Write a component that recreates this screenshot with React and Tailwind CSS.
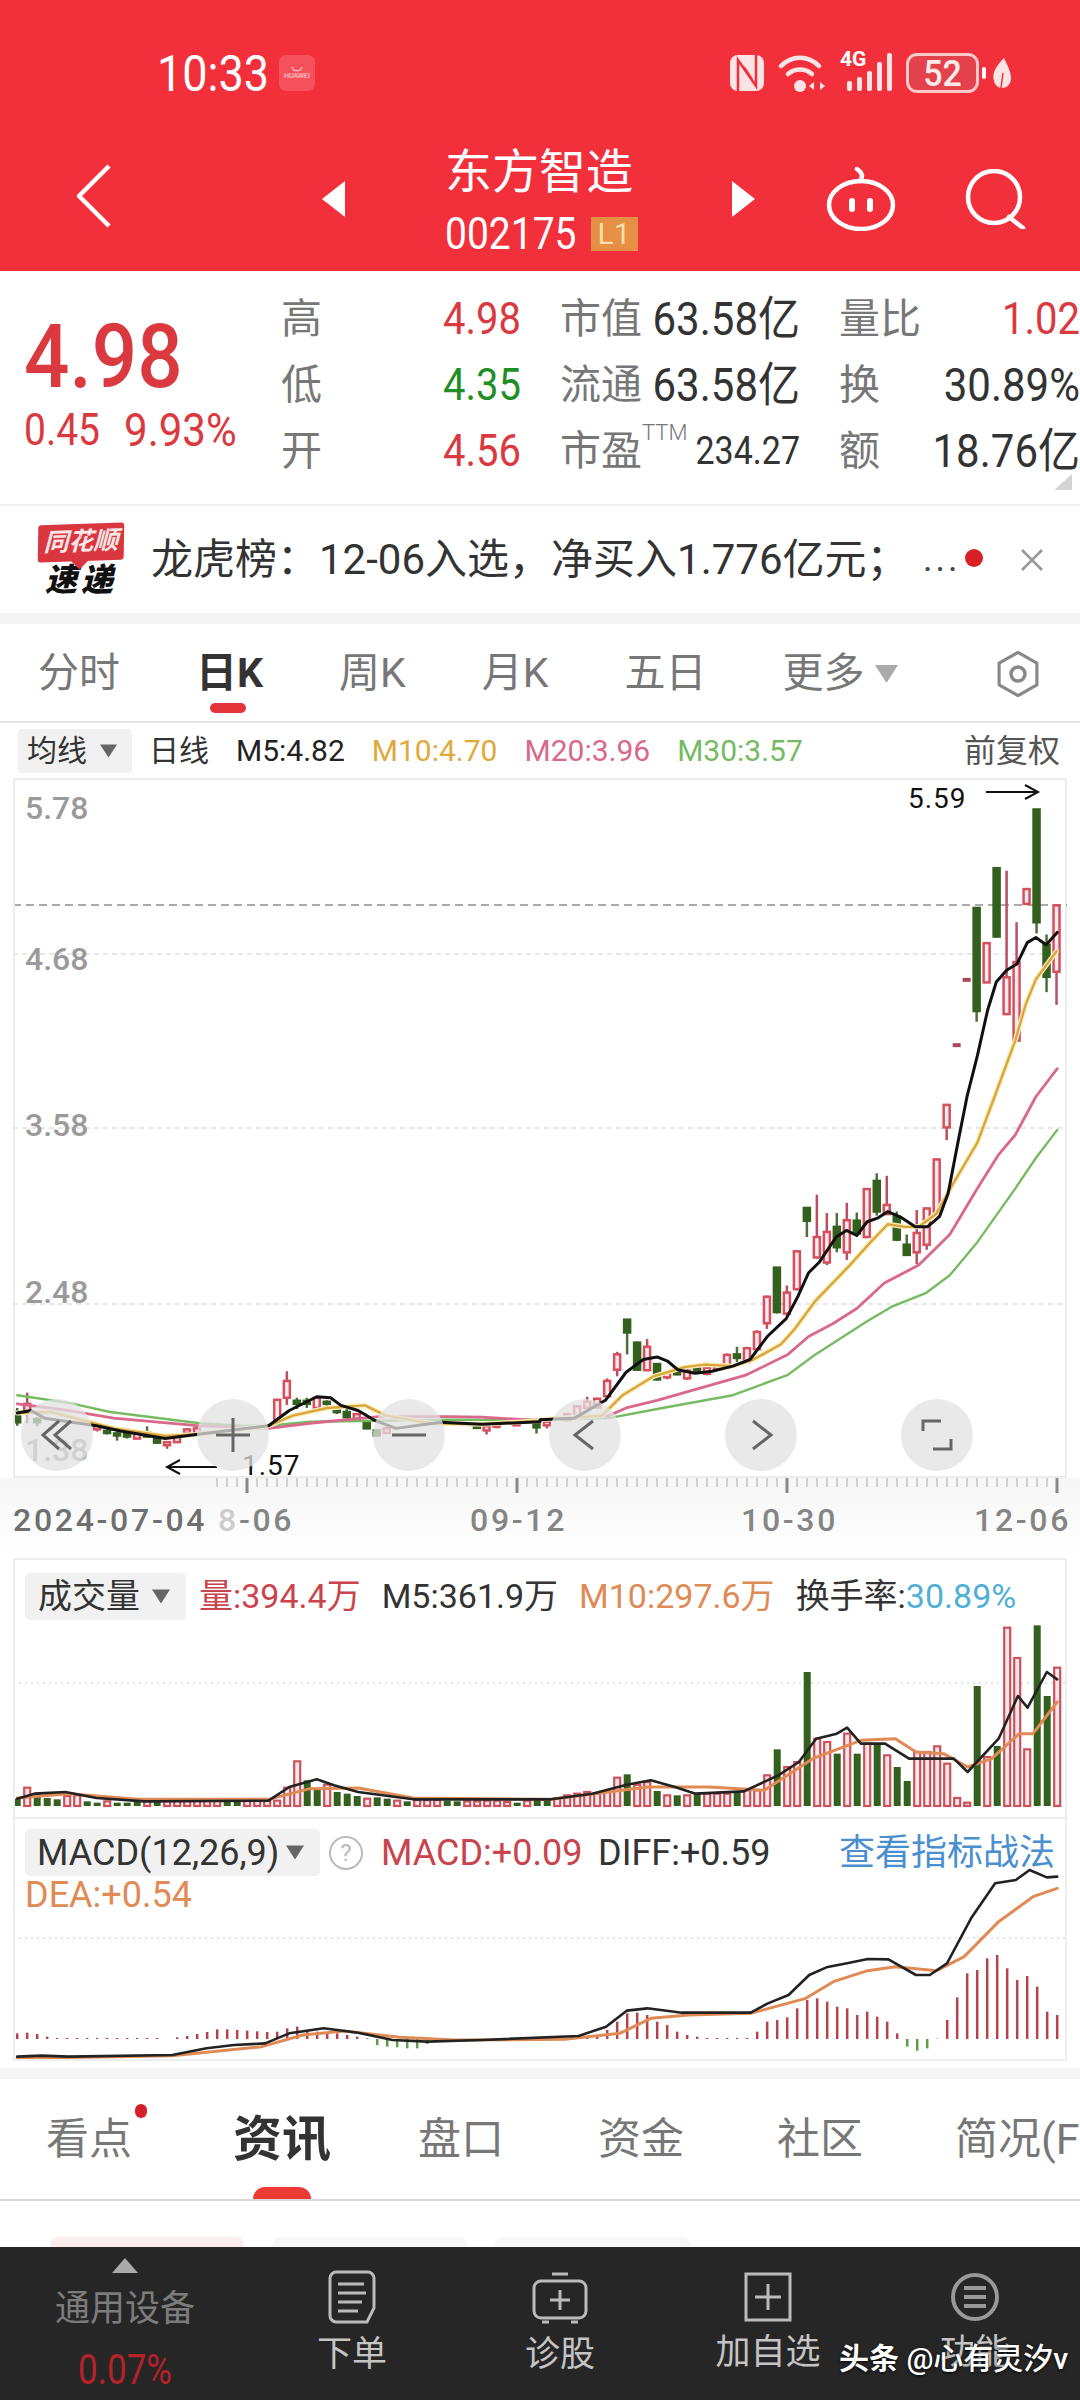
const UP = "#d64f5e";
const DOWN = "#33601e";

// chart points below were read off the picture: l() = left half, r() = right half of the price chart
const l = ([x, y]) => [x / 2.904, 760 + y / 1.96];
const r = ([x, y]) => [540 + x / 2.904, 760 + y / 1.96];
const v = ([x, y]) => [x / 1.452, 1560 + y / 3];

const ma5 = [
  ...[[50,1280],[90,1275],[130,1290],[280,1305],[350,1315],[480,1330],[570,1322],[780,1305],[840,1275],[920,1248],[960,1250],[990,1265],[1040,1275],[1090,1295],[1150,1310],[1280,1298],[1400,1302],[1568,1297]].map(l),
  ...[[0,1293],[100,1290],[190,1255],[250,1200],[300,1175],[340,1170],[370,1178],[400,1195],[450,1202],[500,1198],[560,1188],[610,1175],[660,1130],[715,1095],[750,1050],[780,1005],[810,985],[860,935],[890,922],[920,932],[950,905],[980,898],[1010,885],[1050,897],[1090,915],[1125,915],[1160,895],[1185,850],[1215,745],[1240,660],[1270,580],[1300,490],[1325,435],[1355,412],[1385,400],[1415,358],[1440,348],[1470,362],[1502,338]].map(r),
];
const ma10 = [
  ...[[50,1280],[150,1278],[330,1310],[480,1325],[570,1322],[780,1305],[850,1285],[950,1270],[1060,1265],[1120,1285],[1250,1300],[1400,1302],[1568,1295]].map(l),
  ...[[0,1293],[180,1285],[240,1245],[330,1208],[420,1190],[480,1185],[560,1188],[620,1175],[700,1145],[740,1115],[800,1060],[900,990],[960,945],[1010,910],[1060,915],[1100,915],[1150,890],[1200,830],[1270,750],[1320,660],[1380,550],[1410,480],[1440,430],[1500,375]].map(r),
];
const ma20 = [
  ...[[50,1262],[200,1275],[330,1290],[580,1305],[780,1310],[900,1300],[1100,1287],[1300,1287],[1400,1288],[1568,1295]].map(l),
  ...[[0,1293],[200,1285],[250,1270],[340,1255],[480,1228],[600,1205],[720,1165],[780,1130],[850,1105],[920,1075],[1000,1025],[1100,990],[1190,930],[1270,840],[1330,775],[1380,735],[1440,660],[1502,605]].map(r),
];
const ma30 = [
  ...[[50,1245],[200,1260],[320,1278],[580,1300],[700,1305],[780,1305],[900,1297],[1100,1295],[1300,1293],[1568,1293]].map(l),
  ...[[0,1293],[200,1290],[340,1272],[560,1245],[720,1205],[800,1165],[950,1100],[1020,1072],[1120,1045],[1190,1010],[1270,945],[1380,840],[1440,780],[1502,725]].map(r),
];

// x, wick top, body top, body bottom, wick bottom, colour
const leftCandles = [
  [50,1270,1278,1298,1305,"g"],[79,1240,1262,1278,1300,"r"],[108,1288,1292,1298,1306,"g"],
  [282,1302,1305,1312,1316,"r"],[311,1312,1315,1319,1322,"g"],[340,1316,1320,1323,1334,"g"],[369,1316,1320,1326,1330,"g"],
  [398,1315,1317,1330,1331,"r"],[427,1306,1318,1326,1328,"g"],[456,1326,1328,1338,1339,"g"],[485,1335,1337,1343,1350,"r"],
  [514,1324,1326,1337,1338,"r"],[543,1310,1312,1319,1320,"r"],[572,1308,1310,1319,1320,"r"],
  [805,1252,1254,1295,1296,"r"],[833,1198,1217,1250,1264,"r"],[862,1250,1256,1262,1272,"g"],[891,1250,1256,1262,1270,"g"],
  [920,1246,1250,1270,1274,"r"],[949,1255,1258,1262,1266,"g"],[978,1264,1270,1278,1282,"g"],[1007,1272,1278,1288,1292,"g"],
  [1036,1280,1282,1291,1292,"r"],[1065,1294,1296,1310,1311,"g"],[1094,1312,1314,1324,1325,"g"],[1123,1308,1310,1319,1320,"r"],
  [1385,1300,1302,1309,1310,"g"],[1413,1304,1306,1314,1322,"r"],[1442,1300,1302,1307,1310,"r"],[1500,1297,1299,1304,1305,"r"],[1558,1296,1298,1308,1320,"g"],
];
const rightCandles = [
  [20,1295,1297,1304,1310,"r"],[79,1280,1282,1294,1295,"r"],[108,1265,1267,1288,1290,"r"],[137,1248,1258,1270,1272,"r"],[166,1250,1252,1269,1270,"r"],
  [195,1212,1217,1247,1250,"r"],[224,1160,1165,1195,1208,"r"],[253,1097,1097,1122,1165,"g"],[282,1140,1142,1195,1196,"g"],[311,1135,1150,1196,1198,"r"],
  [340,1182,1184,1214,1216,"g"],[369,1198,1202,1210,1214,"r"],[398,1190,1193,1204,1206,"g"],[427,1193,1197,1212,1215,"r"],[456,1186,1190,1197,1200,"g"],
  [485,1188,1191,1203,1206,"r"],[514,1183,1186,1194,1196,"r"],[543,1163,1166,1190,1192,"r"],[572,1150,1165,1172,1180,"g"],[601,1150,1153,1180,1181,"r"],
  [630,1118,1121,1155,1157,"r"],[659,1050,1052,1104,1115,"r"],[688,995,995,1082,1085,"g"],[717,1030,1044,1085,1090,"r"],[746,961,963,1037,1040,"r"],
  [775,878,878,903,935,"g"],[804,852,935,975,977,"r"],[833,888,925,985,990,"r"],[862,888,915,955,965,"g"],[891,868,902,965,980,"r"],
  [920,887,903,928,932,"g"],[949,839,841,935,937,"r"],[978,810,825,885,893,"g"],[1007,815,872,890,892,"r"],[1036,885,895,940,943,"g"],
  [1065,930,950,970,972,"g"],[1094,882,927,965,988,"r"],[1123,877,879,950,960,"r"],[1152,781,783,885,895,"r"],[1181,674,676,720,745,"r"],
  [1210,555,555,561,561,"d"],[1239,427,427,433,433,"d"],[1268,290,290,492,513,"g"],[1297,357,359,436,437,"r"],[1326,212,212,346,348,"g"],
  [1355,217,426,498,500,"r"],[1384,318,396,550,552,"r"],[1413,251,253,282,284,"r"],[1442,97,97,318,340,"g"],[1471,342,362,425,455,"g"],[1500,283,285,415,480,"r"],
];

const volBars = [
  [710,"g"],[677,"r"],[695,"g"],[708,"g"],[712,"g"],[702,"r"],[700,"r"],[718,"g"],[722,"g"],[718,"r"],[722,"g"],[722,"g"],[720,"g"],[716,"r"],[720,"g"],[716,"r"],
  [714,"r"],[714,"r"],[714,"r"],[712,"r"],[714,"r"],[716,"g"],[716,"g"],[712,"r"],[716,"r"],[716,"r"],[716,"r"],[677,"r"],[598,"r"],[655,"g"],[680,"g"],[668,"r"],
  [690,"g"],[695,"g"],[702,"g"],[710,"r"],[706,"g"],[710,"g"],[716,"r"],[718,"g"],[714,"r"],[714,"r"],[714,"r"],[716,"g"],[718,"g"],[718,"r"],[718,"r"],[716,"r"],
  [716,"r"],[720,"r"],[722,"g"],[716,"r"],[714,"g"],[716,"g"],[710,"r"],[700,"r"],[695,"r"],[690,"r"],[695,"r"],[688,"r"],[647,"r"],[637,"g"],[668,"r"],[660,"r"],
  [687,"g"],[700,"r"],[700,"g"],[700,"r"],[695,"g"],[695,"r"],[695,"r"],[695,"r"],[690,"g"],[685,"r"],[685,"r"],[640,"r"],[562,"g"],[615,"r"],[600,"r"],[330,"g"],
  [530,"r"],[540,"r"],[575,"g"],[515,"r"],[575,"g"],[545,"r"],[545,"g"],[580,"r"],[615,"g"],[657,"g"],[570,"r"],[570,"r"],[553,"r"],[605,"r"],[708,"r"],[722,"r"],
  [372,"g"],[585,"r"],[552,"g"],[197,"r"],[288,"r"],[562,"r"],[190,"g"],[402,"g"],[317,"r"],
];
const volM5 = [[25,710],[50,695],[95,690],[140,708],[210,718],[390,716],[420,675],[460,652],[485,670],[520,690],[600,712],[800,712],[860,695],[910,668],[945,655],[980,675],[1010,695],[1080,688],[1130,640],[1160,600],[1185,530],[1215,515],[1230,497],[1250,545],[1285,545],[1320,590],[1385,590],[1405,630],[1450,530],[1478,402],[1492,437],[1520,330],[1535,352]].map(v);
const volM10 = [[25,708],[100,695],[200,712],[390,712],[450,680],[520,678],[600,708],[800,712],[940,675],[1030,675],[1110,685],[1180,590],[1250,535],[1300,530],[1330,570],[1370,575],[1405,615],[1440,590],[1480,515],[1500,515],[1535,420]].map(v);

const macdTops = [
  1420,1418,1422,1430,1434,1434,1434,1434,1434,1434,1434,1434,1434,1434,1434,1437,1432,1428,1422,1416,1408,1408,1410,1412,1414,1416,1415,1405,1400,1410,1415,1418,
  1420,1425,1430,1435,1455,1460,1462,1465,1465,1452,1445,1441,1440,1440,1440,1440,1440,1440,1440,1436,1436,1436,1436,1436,1434,1432,1425,1410,1385,1360,1358,1365,
  1385,1395,1415,1425,1430,1434,1434,1434,1434,1434,1415,1385,1380,1372,1345,1320,1315,1325,1340,1345,1365,1355,1370,1385,1420,1460,1472,1465,1436,1380,1312,1240,
  1230,1195,1185,1225,1260,1248,1280,1355,1365,
];
const diff = [[25,1490],[60,1487],[100,1490],[250,1485],[300,1465],[340,1455],[385,1450],[420,1420],[470,1405],[520,1418],[570,1440],[620,1445],[700,1440],[840,1428],[880,1400],[910,1352],[940,1345],[990,1358],[1090,1358],[1115,1330],[1145,1305],[1175,1245],[1200,1222],[1230,1210],[1260,1197],[1290,1198],[1330,1245],[1350,1245],[1375,1210],[1410,1075],[1445,970],[1475,960],[1495,930],[1520,952],[1535,950]].map(v);
const dea = [[25,1495],[250,1487],[380,1460],[440,1425],[500,1413],[580,1432],[660,1440],[820,1438],[900,1420],[945,1375],[1000,1365],[1090,1360],[1170,1315],[1210,1265],[1260,1232],[1300,1220],[1360,1232],[1400,1190],[1450,1085],[1500,1010],[1535,985]].map(v);

function Line({ pts, color, width = 2.4 }) {
  return (
    <polyline
      points={pts.map((p) => p.join(",")).join(" ")}
      fill="none"
      stroke={color}
      strokeWidth={width}
      strokeLinejoin="round"
      strokeLinecap="round"
    />
  );
}

function Candle({ c, map }) {
  const [x, wt, bt, bb, wb, t] = c;
  const [cx, y1] = map([x, wt]);
  const [, y2] = map([x, bt]);
  const [, y3] = map([x, bb]);
  const [, y4] = map([x, wb]);
  if (t === "d") {
    return <rect x={cx - 4} y={y1} width="8" height="4" fill="#a8485a" />;
  }
  const up = t === "r";
  return (
    <g>
      <line x1={cx} x2={cx} y1={y1} y2={y4} stroke={up ? "#b85060" : "#4d6f3a"} strokeWidth="2.5" />
      <rect
        x={cx - 3}
        y={y2}
        width="6"
        height={Math.max(y3 - y2, 2)}
        fill={up ? "#fdeaec" : DOWN}
        stroke={up ? UP : DOWN}
        strokeWidth="2.5"
      />
    </g>
  );
}

function Caret({ className }) {
  return (
    <svg viewBox="0 0 18 14" className={className}>
      <polygon points="0,0 18,0 9,14" fill="currentColor" />
    </svg>
  );
}

function Num({ className, children }) {
  return <span className={"inline-block scale-y-[1.12] " + (className || "")}>{children}</span>;
}

function StatusBar() {
  return (
    <div className="flex items-center h-[146px] pl-[157px] text-white">
      <span className="text-[45px] leading-none scale-y-[1.12] w-[122px]">10:33</span>
      <div className="w-[36px] h-[36px] rounded-[7px] bg-[#f6505a] flex flex-col items-center justify-center">
        <svg width="14" height="7" viewBox="0 0 14 7"><path d="M2 1c1 5 9 5 10 0" fill="none" stroke="#ffd9d9" strokeWidth="1.2" /></svg>
        <span className="text-[7px] leading-none text-[#ffe3e3]">HUAWEI</span>
      </div>
      <svg width="34" height="36" viewBox="0 0 34 36" className="ml-[415px]">
        <rect x="0" y="0" width="34" height="36" rx="8" fill="#fde4e4" />
        <path d="M8 36V5l18 26V0" fill="none" stroke="#f2303c" strokeWidth="2.5" />
        <path d="M14 12l8 12" stroke="#f2303c" strokeWidth="2" />
      </svg>
      <svg width="48" height="40" viewBox="0 0 48 40" className="ml-[14px]">
        <g fill="none" stroke="#fde4e4" strokeWidth="4.5" strokeLinecap="round">
          <path d="M3 13C14 2 30 2 41 13" />
          <path d="M10 21c7-6 17-6 24 0" />
        </g>
        <circle cx="22" cy="33" r="6" fill="#fde4e4" />
        <path d="M31 33l5-4v8zM47 33l-5-4v8z" fill="#fde4e4" />
      </svg>
      <div className="ml-[14px] relative w-[54px] h-[40px]">
        <span className="absolute left-0 top-[-4px] text-[21px] leading-none font-bold">4G</span>
        <svg width="54" height="40" viewBox="0 0 54 40">
          <g fill="#fde4e4">
            <rect x="7" y="28" width="5" height="10" rx="2" />
            <rect x="17" y="24" width="5" height="14" rx="2" />
            <rect x="27" y="18" width="5" height="20" rx="2" />
            <rect x="37" y="9" width="5" height="29" rx="2" />
            <rect x="47" y="0" width="5" height="38" rx="2" />
          </g>
        </svg>
      </div>
      <div className="ml-[12px] w-[73px] h-[40px] rounded-[11px] border-[3px] border-[#ffc9cc] bg-[#d94c55]/60 flex items-center justify-center">
        <span className="text-[34px] leading-none font-medium scale-y-[1.1] text-[#fdeaea]">52</span>
      </div>
      <div className="ml-[3px] w-[4px] h-[12px] bg-white rounded-full" />
      <svg width="20" height="32" viewBox="0 0 20 32" className="ml-[6px]">
        <path d="M12 1C3 10 0 17 2 24c1 4 4 7 8 7 5 0 9-4 9-10C19 14 15 8 12 1z" fill="#fde4e4" />
        <path d="M9 31l2-15" stroke="#f2303c" strokeWidth="1.5" />
      </svg>
    </div>
  );
}

function TitleBar() {
  return (
    <div className="flex h-[125px] text-white">
      <svg width="38" height="64" viewBox="0 0 38 64" className="ml-[75px] mt-[18px]">
        <path d="M34 2L4 32l30 30" fill="none" stroke="#fff" strokeWidth="4.5" strokeLinejoin="round" />
      </svg>
      <svg width="23" height="36" viewBox="0 0 23 36" className="ml-[209px] mt-[35px]">
        <polygon points="23,0 23,36 0,18" fill="#fff" />
      </svg>
      <div className="ml-[100px] w-[194px] flex flex-col">
        <div className="text-[47px] leading-[46px] mt-[3px] whitespace-nowrap">东方智造</div>
        <div className="flex items-center mt-[22px] h-[34px]">
          <Num className="text-[39px] leading-none">002175</Num>
          <div className="ml-[14px] w-[47px] h-[34px] bg-[#e59045] text-[#f8dfa8] text-[30px] leading-none flex items-center justify-center">L1</div>
        </div>
      </div>
      <svg width="23" height="36" viewBox="0 0 23 36" className="ml-[93px] mt-[35px]">
        <polygon points="0,0 0,36 23,18" fill="#fff" />
      </svg>
      <svg width="70" height="64" viewBox="0 0 70 64" className="ml-[71px] mt-[21px]">
        <g fill="none" stroke="#fff" strokeWidth="4.5" strokeLinecap="round">
          <ellipse cx="35" cy="38" rx="32" ry="24" />
          <path d="M34 14c3-4 3-8-3-12" />
        </g>
        <rect x="23" y="31" width="6" height="14" rx="3" fill="#fff" />
        <rect x="41" y="31" width="6" height="14" rx="3" fill="#fff" />
      </svg>
      <svg width="62" height="60" viewBox="0 0 62 60" className="ml-[69px] mt-[23px]">
        <circle cx="29" cy="28" r="26" fill="none" stroke="#fff" strokeWidth="4.5" />
        <path d="M44 48l14 11" stroke="#fff" strokeWidth="4.5" strokeLinecap="round" />
      </svg>
    </div>
  );
}

function Stat({ label, value, valueClass = "text-[#333] text-[42px]" }) {
  return (
    <div className="flex items-center justify-between h-[66px] whitespace-nowrap">
      <span className="text-[41px] leading-none text-[#777]">{label}</span>
      <Num className={"leading-none " + valueClass}>{value}</Num>
    </div>
  );
}

function Quote() {
  return (
    <div className="relative flex h-[235px] bg-white border-b-2 border-[#f0f0f0]">
      <div className="w-[281px] pl-[24px] pt-[41px] text-[#d9393f]">
        <Num className="text-[80px] leading-[90px] font-medium">4.98</Num>
        <div className="flex items-center gap-[24px] mt-[6px] text-[39px] leading-[44px] whitespace-nowrap">
          <Num>0.45</Num>
          <Num className="text-[42px]">9.93%</Num>
        </div>
      </div>
      <div className="grid grid-cols-[240px_240px_241px] gap-x-[39px] pt-[15px] w-[799px] overflow-hidden">
        <div>
          <Stat label="高" value="4.98" valueClass="text-[#d9393f] text-[40px]" />
          <Stat label="低" value="4.35" valueClass="text-[#1f8f25] text-[40px]" />
          <Stat label="开" value="4.56" valueClass="text-[#d9393f] text-[40px]" />
        </div>
        <div>
          <Stat label="市值" value="63.58亿" />
          <Stat label="流通" value="63.58亿" />
          <div className="flex items-center justify-between h-[66px]">
            <span className="text-[41px] leading-none text-[#777]">
              市盈<sup className="text-[22px] font-light align-[14px]">TTM</sup>
            </span>
            <Num className="text-[34px] leading-none text-[#333]">234.27</Num>
          </div>
        </div>
        <div>
          <Stat label="量比" value="1.02" valueClass="text-[#d9393f] text-[40px]" />
          <Stat label="换" value="30.89%" />
          <Stat label="额" value="18.76亿" />
        </div>
      </div>
      <svg width="18" height="16" viewBox="0 0 18 16" className="absolute right-[8px] bottom-[14px]">
        <polygon points="18,0 18,16 0,16" fill="#d4d4d4" />
      </svg>
    </div>
  );
}

function News() {
  return (
    <div className="flex items-center h-[107px] pl-[37px] bg-white">
      <div className="w-[88px] h-[72px] flex flex-col items-center">
        <div className="relative w-[86px] h-[37px] bg-[#d93640] rounded-[3px] -rotate-2 -skew-x-3 text-[#fbe6e6] text-[25px] leading-[36px] font-bold italic text-center whitespace-nowrap">
          同花顺
          <div className="absolute left-[36px] -bottom-[6px] w-[12px] h-[12px] bg-[#d93640] rotate-45" />
        </div>
        <div className="mt-[3px] text-[#111] text-[32px] leading-[32px] font-black italic tracking-[4px] whitespace-nowrap">速递</div>
      </div>
      <div className="ml-[26px] w-[772px] text-[42px] leading-none text-[#333] whitespace-nowrap">龙虎榜：12-06入选，净买入1.776亿元；</div>
      <span className="text-[36px] leading-none text-[#444] w-[42px] tracking-[3px] -mt-[2px]">...</span>
      <div className="w-[18px] h-[18px] rounded-full bg-[#d91f26] -mt-[4px]" />
      <svg width="24" height="24" viewBox="0 0 24 24" className="ml-[37px]">
        <path d="M2 2l20 20M22 2L2 22" stroke="#999" strokeWidth="2.5" />
      </svg>
    </div>
  );
}

function KlineTabs() {
  return (
    <div className="flex items-center h-[99px] pt-[2px] pl-[38px] pr-[37px] gap-[76px] bg-white border-b-2 border-[#e4e4e4] text-[41px] leading-none text-[#777] whitespace-nowrap">
      <span>分时</span>
      <div className="relative font-bold text-[#333]">
        日K
        <div className="absolute left-[14px] top-[50px] w-[36px] h-[10px] rounded-full bg-[#e5333a]" />
      </div>
      <span>周K</span>
      <span>月K</span>
      <span>五日</span>
      <div className="flex items-center">
        更多
        <Caret className="w-[23px] h-[22px] ml-[10px] text-[#aaa]" />
      </div>
      <svg width="50" height="46" viewBox="0 0 50 46" className="ml-auto">
        <path d="M25 -1l21 12v24L25 47 4 35V11z" fill="none" stroke="#888" strokeWidth="3.5" strokeLinejoin="round" transform="translate(2.5 2.3) scale(.9)" />
        <circle cx="25" cy="23" r="7" fill="none" stroke="#888" strokeWidth="3.5" />
      </svg>
    </div>
  );
}

function MaLegend() {
  return (
    <div className="flex items-center h-[55px] pl-[18px] pr-[20px] gap-[27px] text-[30px] leading-none whitespace-nowrap bg-white">
      <div className="flex items-center h-[44px] w-[114px] pl-[9px] -mr-[10px] rounded-[4px] bg-[#f1f1f1] text-[#333]">
        均线
        <Caret className="w-[17px] h-[14px] ml-[13px] text-[#666]" />
      </div>
      <span className="text-[#333]">日线</span>
      <span className="text-[#222]">M5:4.82</span>
      <span className="text-[#e0a93b]">M10:4.70</span>
      <span className="text-[#d9688a]">M20:3.96</span>
      <span className="text-[#76bb62]">M30:3.57</span>
      <span className="ml-auto text-[32px] text-[#555]">前复权</span>
    </div>
  );
}

function RoundBtn({ children, className }) {
  return (
    <div className={"absolute top-[619px] w-[72px] h-[72px] rounded-full bg-[#e2e2e2]/75 flex items-center justify-center " + className}>
      <svg width="40" height="40" viewBox="0 0 40 40" fill="none" stroke="#666" strokeWidth="3">
        {children}
      </svg>
    </div>
  );
}

function PriceChart() {
  const labels = [
    ["5.78", "top-[12px]"],
    ["4.68", "top-[163px]"],
    ["3.58", "top-[329px]"],
    ["2.48", "top-[496px]"],
    ["1.38", "top-[654px]"],
  ];
  return (
    <div className="relative h-[700px] mx-[13px] border-2 border-[#ececec] bg-white">
      <svg width="1054" height="696" viewBox="15 780 1054 696" className="block">
        {[954, 1128, 1304].map((y) => (
          <line key={y} x1="13" x2="1067" y1={y} y2={y} stroke="#e0e0e0" strokeWidth="1.5" strokeDasharray="5 4" />
        ))}
        <line x1="13" x2="1067" y1="905" y2="905" stroke="#aaa" strokeWidth="2" strokeDasharray="8 5" />
        {leftCandles.map((c, i) => <Candle key={i} c={c} map={l} />)}
        {rightCandles.map((c, i) => <Candle key={i} c={c} map={r} />)}
        <Line pts={ma30} color="#76bb62" />
        <Line pts={ma20} color="#d9688a" width="2.8" />
        <Line pts={ma10} color="#fbeebd" width="5" />
        <Line pts={ma10} color="#d9a63c" />
        <Line pts={ma5} color="#111" width="3" />
        <path d="M217 1467H167M180 1460l-13 7 13 7" fill="none" stroke="#111" strokeWidth="2" />
        <path d="M986 792h52M1025 785l13 7-13 7" fill="none" stroke="#111" strokeWidth="2" />
      </svg>
      {labels.map(([t, pos]) => (
        <span key={t} className={"absolute left-[10px] text-[32px] leading-[32px] font-medium text-[#9a9a9a] " + pos}>{t}</span>
      ))}
      <span className="absolute left-[227px] top-[672px] text-[28px] leading-[28px] tracking-[1px] text-[#111]">1.57</span>
      <span className="absolute left-[893px] top-[5px] text-[28px] leading-[28px] tracking-[1px] text-[#111]">5.59</span>
      <RoundBtn className="left-[6px]">
        <path d="M22 6L6 20l16 14M34 6L18 20l16 14" />
      </RoundBtn>
      <RoundBtn className="left-[182px]">
        <path d="M3 20h34M20 3v34" />
      </RoundBtn>
      <RoundBtn className="left-[358px]">
        <path d="M3 20h34" />
      </RoundBtn>
      <RoundBtn className="left-[534px]">
        <path d="M28 6L10 20l18 14" />
      </RoundBtn>
      <RoundBtn className="left-[710px]">
        <path d="M12 6l18 14-18 14" />
      </RoundBtn>
      <RoundBtn className="left-[886px]">
        <path d="M6 16V6h18M34 24v10H16" />
      </RoundBtn>
    </div>
  );
}

function DateAxis() {
  const ticks = [];
  for (let x = 217; x <= 1057; x += 10) ticks.push(x);
  return (
    <div className="h-[80px] bg-gradient-to-b from-[#f6f6f6] to-white">
      <svg width="1080" height="18" viewBox="0 0 1080 18" className="block">
        {ticks.map((x) => {
          const big = (x - 247) % 270 === 0;
          return <line key={x} x1={x} x2={x} y1="0" y2={big ? 15 : 9} stroke={big ? "#888" : "#c4c4c4"} strokeWidth={big ? 3 : 1.5} />;
        })}
      </svg>
      <div className="flex pl-[13px] mt-[8px] text-[32px] leading-[32px] font-medium tracking-[2.7px] text-[#858585] whitespace-nowrap">
        <span className="w-[205px] text-[#6f6f6f]">2024-07-04</span>
        <span className="w-[252px]"><span className="text-[#ccc]">8</span>-06</span>
        <span className="w-[271px]">09-12</span>
        <span className="w-[233px]">10-30</span>
        <span>12-06</span>
      </div>
    </div>
  );
}

function VolumePanel() {
  return (
    <div className="h-[259px] mx-[13px] border-x-2 border-t-2 border-[#eee] bg-white">
      <div className="flex items-center h-[64px] pl-[10px] pt-[8px] gap-[21px] text-[34px] leading-none whitespace-nowrap">
        <div className="flex items-center h-[47px] w-[161px] pl-[13px] rounded-[5px] bg-[#f1f1f1] text-[#333] -mr-[8px]">
          成交量
          <Caret className="w-[18px] h-[15px] ml-[12px] text-[#666]" />
        </div>
        <span className="text-[#c9444c]">量:394.4万</span>
        <span className="text-[#333]">M5:361.9万</span>
        <span className="text-[#e08a55]">M10:297.6万</span>
        <span className="text-[#333]">换手率:<span className="text-[#4fb0d6]">30.89%</span></span>
      </div>
      <svg width="1050" height="190" viewBox="15 1622 1050 190" className="block">
        <line x1="13" x2="1067" y1="1681" y2="1681" stroke="#e4e4e4" strokeWidth="2" strokeDasharray="2 4" />
        {volBars.map(([top, t], i) => {
          const x = 17.2 + 10 * i;
          const y = 1560 + top / 3;
          return t === "r" ? (
            <rect key={i} x={x - 3} y={y} width="6" height={1804 - y} fill="#fbe6e8" stroke="#c9525c" strokeWidth="2.2" />
          ) : (
            <rect key={i} x={x - 3.5} y={y} width="7" height={1804 - y} fill={DOWN} />
          );
        })}
        <Line pts={volM10} color="#e08a55" width="3" />
        <Line pts={volM5} color="#222" width="2.6" />
      </svg>
    </div>
  );
}

function MacdPanel() {
  return (
    <div className="relative h-[244px] mx-[13px] border-x-2 border-y-2 border-[#eee] bg-white">
      <svg width="1050" height="240" viewBox="15 1819 1050 240" className="absolute left-0 top-0">
        <line x1="13" x2="1067" y1="1938" y2="1938" stroke="#e4e4e4" strokeWidth="2" strokeDasharray="2 4" />
        {macdTops.map((top, i) => {
          const x = 17.2 + 10 * i;
          const y = 1560 + top / 3;
          const up = top < 1438;
          return <line key={i} x1={x} x2={x} y1={2039} y2={y} stroke={up ? "#b5434b" : "#5e9e4a"} strokeWidth="2.5" />;
        })}
        <Line pts={dea} color="#e08a55" width="3" />
        <Line pts={diff} color="#222" width="2.6" />
      </svg>
      <div className="relative flex items-center pl-[10px] pt-[9px] h-[58px] text-[36px] leading-none whitespace-nowrap">
        <div className="flex items-center h-[47px] w-[295px] pl-[12px] rounded-[5px] bg-[#f1f1f1] text-[#333]">
          MACD(12,26,9)
          <Caret className="w-[18px] h-[15px] ml-[7px] text-[#666]" />
        </div>
        <div className="ml-[9px] w-[34px] h-[34px] rounded-full border-2 border-[#bbb] text-[#bbb] text-[24px] flex items-center justify-center">?</div>
        <span className="ml-[18px] w-[217px] text-[#c9444c]">MACD:+0.09</span>
        <span className="w-[241px] text-[#333]">DIFF:+0.59</span>
        <span className="text-[#4a8fd0]">查看指标战法</span>
      </div>
      <div className="relative pl-[10px] text-[36px] leading-none text-[#e08a55]">DEA:+0.54</div>
    </div>
  );
}

function InfoTabs() {
  return (
    <div className="relative flex items-center h-[122px] pl-[46px] border-b-2 border-[#d8d8d8] bg-white text-[43px] leading-none text-[#777] whitespace-nowrap overflow-hidden">
      <div className="relative w-[187px] shrink-0">
        看点
        <div className="absolute left-[89px] -top-[14px] w-[12px] h-[14px] rounded-full bg-[#d3202a]" />
      </div>
      <div className="relative w-[185px] shrink-0 text-[49px] font-bold text-[#333]">
        资讯
      </div>
      <span className="w-[180px] shrink-0">盘口</span>
      <span className="w-[179px] shrink-0">资金</span>
      <span className="w-[178px] shrink-0">社区</span>
      <span className="shrink-0">简况(F10)</span>
      <div className="absolute left-[253px] bottom-0 w-[58px] h-[12px] rounded-t-full rounded-b-[4px] bg-[#ee3a35]" />
    </div>
  );
}

function BottomBar() {
  return (
    <div className="relative grid grid-cols-[250px_204px_212px_204px_210px] h-[153px] bg-[#262626] text-[#c4c4c4] text-[35px] leading-none whitespace-nowrap">
      <div className="flex flex-col items-center pt-[11px]">
        <svg width="26" height="15" viewBox="0 0 26 15"><polygon points="13,0 26,15 0,15" fill="#aaa" /></svg>
        <span className="text-[#7c7c7c] mt-[18px] scale-y-[1.05]">通用设备</span>
        <span className="text-[#b5222a] mt-[27px] scale-y-[1.2]">0.07%</span>
      </div>
      <div className="flex flex-col items-center pt-[23px]">
        <svg width="48" height="54" viewBox="0 0 48 54" fill="none" stroke="#bbb" strokeWidth="3">
          <path d="M8 2h32c3 0 6 3 6 6v30l-7 14H8c-3 0-6-3-6-6V8c0-3 3-6 6-6z" />
          <path d="M10 14h26M10 23h28M10 32h24M10 41h20" />
        </svg>
        <span className="mt-[13px]">下单</span>
      </div>
      <div className="flex flex-col items-center pt-[25px]">
        <svg width="56" height="52" viewBox="0 0 56 52" fill="none" stroke="#bbb" strokeWidth="3">
          <path d="M20 2h16" />
          <rect x="2" y="9" width="52" height="37" rx="7" />
          <path d="M10 50h7M39 50h7M28 18v20M18 28h20" />
        </svg>
        <span className="mt-[13px]">诊股</span>
      </div>
      <div className="flex flex-col items-center pt-[25px]">
        <svg width="48" height="50" viewBox="0 0 48 50" fill="none" stroke="#bbb" strokeWidth="3">
          <rect x="2" y="2" width="44" height="46" />
          <path d="M24 12v26M11 25h26" />
        </svg>
        <span className="mt-[13px]">加自选</span>
      </div>
      <div className="flex flex-col items-center pt-[25px]">
        <svg width="50" height="50" viewBox="0 0 50 50" fill="none" stroke="#999" strokeWidth="4">
          <circle cx="25" cy="25" r="22" />
          <path d="M14 16h22M14 25h22M14 34h22" />
        </svg>
        <span className="mt-[13px]">功能</span>
      </div>
      <div className="absolute left-[839px] top-[97px] text-[30px] leading-none font-medium text-white [text-shadow:0_1px_3px_rgba(0,0,0,.9)]">
        <span className="font-bold">头条</span> @心有灵汐v
      </div>
    </div>
  );
}

export default function App() {
  return (
    <div className="w-[1080px] h-[2400px] overflow-hidden bg-white font-['Roboto','Noto_Sans_CJK_SC',sans-serif]">
      <div className="h-[271px] bg-[#f2303c]">
        <StatusBar />
        <TitleBar />
      </div>
      <Quote />
      <News />
      <div className="h-[11px] bg-[#f5f5f5]" />
      <KlineTabs />
      <MaLegend />
      <PriceChart />
      <DateAxis />
      <VolumePanel />
      <MacdPanel />
      <div className="h-[7px]" />
      <div className="h-[11px] bg-[#f5f5f5]" />
      <InfoTabs />
      <div className="flex gap-[28px] h-[46px] pl-[50px] pt-[36px] bg-white">
        <div className="w-[194px] h-[10px] rounded-t-[8px] bg-[#fdeeee]" />
        <div className="w-[195px] h-[10px] rounded-t-[8px] bg-[#f7f7f7]" />
        <div className="w-[195px] h-[10px] rounded-t-[8px] bg-[#f7f7f7]" />
      </div>
      <BottomBar />
    </div>
  );
}
